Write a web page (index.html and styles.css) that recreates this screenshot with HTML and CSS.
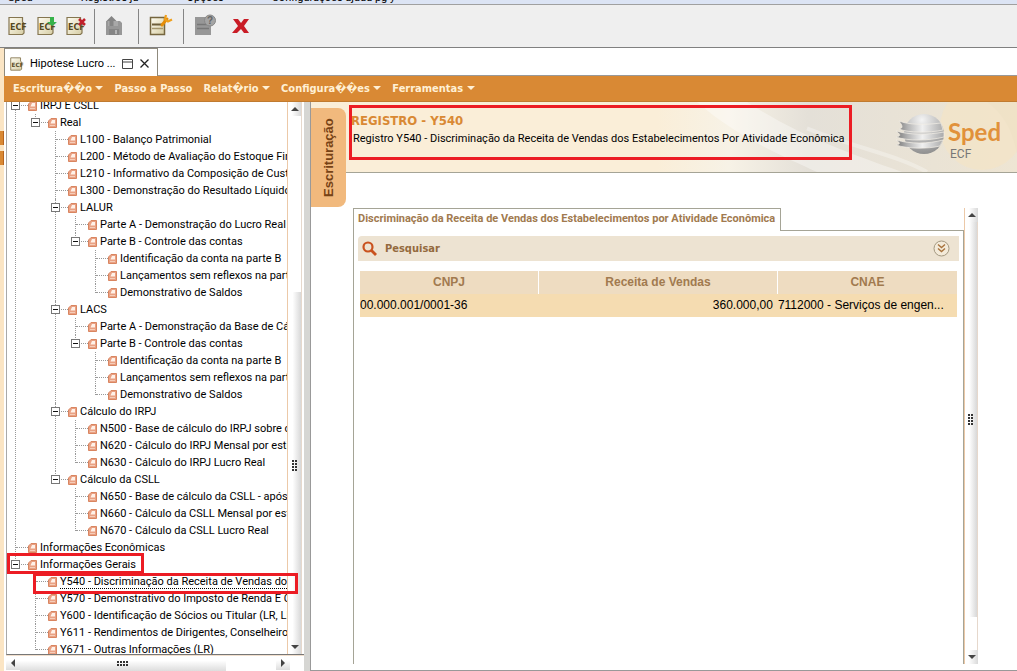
FILE: index.html
```html
<!DOCTYPE html>
<html lang="pt-BR">
<head>
<meta charset="utf-8">
<title>Sped ECF</title>
<link rel="stylesheet" href="styles.css">
</head>
<body>
<svg class="defs" aria-hidden="true">
  <defs>
    <linearGradient id="paper" x1="0" y1="0" x2="1" y2="1"><stop offset="0" stop-color="#fffdf2"/><stop offset="1" stop-color="#d6cda4"/></linearGradient>
    <radialGradient id="ball" cx=".45" cy=".15" r=".9"><stop offset="0" stop-color="#f4f4f4"/><stop offset=".5" stop-color="#bdbdbd"/><stop offset="1" stop-color="#8a8a8a"/></radialGradient>
    <linearGradient id="band"><stop offset="0" stop-color="#777"/><stop offset=".25" stop-color="#b5b5b5"/><stop offset=".55" stop-color="#f0f0f0"/><stop offset="1" stop-color="#a9a9a9"/></linearGradient>
    <symbol id="page" viewBox="0 0 9 10"><path d="M3 .5h5.500v9H.5V3z" fill="#e9a184"/><path d="M8.500.5v9H.5V3L3 .5z" fill="none" stroke="#d98560"/><path d="M4 2h3v3.500H2.500z" fill="#fff1e8"/><path d="M2 7.500h5" stroke="#f5cdb9"/></symbol>
    <symbol id="ecf" viewBox="0 0 22 22"><path d="M2 2.500h13.500v4.500l1.500 1.500v9.500l-1.500 1.500H2z" fill="url(#paper)" stroke="#857650" stroke-width="1.200"/><text x="3" y="15" class="ecf-word">ECF</text></symbol>
  </defs>
</svg>
<div class="app">
  <nav class="topstrip" aria-label="Principal"><span>Sped</span><span>Registros já</span><span>Opções</span><span>Configurações ajuda pg y</span></nav>
  <div class="toolbar" role="toolbar">
    <button aria-label="ECF"><svg width="22" height="22"><use href="#ecf"/></svg></button>
    <button aria-label="Importar ECF"><svg width="22" height="22"><use href="#ecf"/><path d="M14 2h4v5h3l-5 4-5-4h3z" fill="#36b24a"/></svg></button>
    <button aria-label="Excluir ECF"><svg width="22" height="22"><use href="#ecf"/><path d="M14 4l6 6M20 4l-6 6" stroke="#c1202b" stroke-width="2.500"/></svg></button>
    <i class="sep"></i>
    <button aria-label="Gravar cópia" disabled><svg width="22" height="22"><path d="M3 6h14l2 2v12H3z" fill="#979797"/><path d="M5 6h10v5H5z" fill="#a8a8a8"/><path d="M6 14h10v6H6z" fill="#858585"/><path d="M8.500 1l5 5h-3v5h-4V6h-3z" fill="#858585"/><path d="M12 15h2v4h-2z" fill="#b5b5b5"/></svg></button>
    <i class="sep"></i>
    <button aria-label="Configurar"><svg width="24" height="24"><path d="M1.500 3.500h14v17h-14z" fill="url(#paper)" stroke="#75663f" stroke-width="1.500"/><path d="M3 10.500h10" stroke="#6e5f3a" stroke-width="2"/><path d="M3 14.500h11" stroke="#a5976c" stroke-width="1.500"/><path d="M13 11l5-6" stroke="#e58e08" stroke-width="3" stroke-linecap="round"/><path d="M17 1l-1 4 3 2.500 4-2" fill="none" stroke="#f0a01c" stroke-width="2.200"/></svg></button>
    <i class="sep"></i>
    <button aria-label="Ajuda" disabled><svg width="24" height="24"><path d="M1 3h16v18H1z" fill="#979797"/><path d="M3 10.500h10M3 14.500h12" stroke="#777" stroke-width="1.500"/><circle cx="16" cy="6.500" r="5.500" fill="#a4a4a4" stroke="#888"/><text x="13" y="10" class="q">?</text></svg></button>
    <button aria-label="Sair" class="exit"><svg width="18" height="16"><path d="M1 1h5l3 4 3-4h5l-5 7 5 7h-5l-3-4-4 4H0l6-7z" fill="#c91c26"/></svg></button>
  </div>
  <div class="shell">
    <div class="edge"><b></b><b></b></div>
    <div class="window">
      <div class="tabs">
        <div class="tab"><svg width="18" height="16" viewBox="0 0 24 22"><use href="#ecf" width="22" height="22"/></svg><span>Hipotese Lucro ...</span>
          <button aria-label="Maximizar"><svg width="11" height="10"><path d="M.5.5h10v9H.5zM.5 3h10" fill="none" stroke="#444"/></svg></button>
          <button aria-label="Fechar"><svg width="9" height="9"><path d="M.5.5l8 8M8.500.5l-8 8" stroke="#222" stroke-width="1.300"/></svg></button>
        </div>
      </div>
      <nav class="menu">
        <button>Escritura&#xFFFD;&#xFFFD;o <i></i></button><button>Passo a Passo</button><button>Relat&#xFFFD;rio <i></i></button><button>Configura&#xFFFD;&#xFFFD;es <i></i></button><button>Ferramentas <i></i></button>
      </nav>
      <div class="work">
        <aside class="side">
          <div class="treebox">
            <div class="tree">
              <ul>
                <li><div class="row"><button aria-label="Recolher"></button><svg><use href="#page"/></svg>IRPJ E CSLL</div>
                  <ul>
                    <li><div class="row"><button aria-label="Recolher"></button><svg><use href="#page"/></svg>Real</div>
                      <ul>
                        <li><div class="row"><svg><use href="#page"/></svg>L100 - Balanço Patrimonial</div></li>
                        <li><div class="row"><svg><use href="#page"/></svg>L200 - Método de Avaliação do Estoque Final</div></li>
                        <li><div class="row"><svg><use href="#page"/></svg>L210 - Informativo da Composição de Custos</div></li>
                        <li><div class="row"><svg><use href="#page"/></svg>L300 - Demonstração do Resultado Líquido no Período</div></li>
                        <li><div class="row"><button aria-label="Recolher"></button><svg><use href="#page"/></svg>LALUR</div>
                          <ul>
                            <li><div class="row"><svg><use href="#page"/></svg>Parte A - Demonstração do Lucro Real</div></li>
                            <li><div class="row"><button aria-label="Recolher"></button><svg><use href="#page"/></svg>Parte B - Controle das contas</div>
                              <ul>
                                <li><div class="row"><svg><use href="#page"/></svg>Identificação da conta na parte B</div></li>
                                <li><div class="row"><svg><use href="#page"/></svg>Lançamentos sem reflexos na parte A</div></li>
                                <li><div class="row"><svg><use href="#page"/></svg>Demonstrativo de Saldos</div></li>
                              </ul></li>
                          </ul></li>
                        <li><div class="row"><button aria-label="Recolher"></button><svg><use href="#page"/></svg>LACS</div>
                          <ul>
                            <li><div class="row"><svg><use href="#page"/></svg>Parte A - Demonstração da Base de Cálculo</div></li>
                            <li><div class="row"><button aria-label="Recolher"></button><svg><use href="#page"/></svg>Parte B - Controle das contas</div>
                              <ul>
                                <li><div class="row"><svg><use href="#page"/></svg>Identificação da conta na parte B</div></li>
                                <li><div class="row"><svg><use href="#page"/></svg>Lançamentos sem reflexos na parte A</div></li>
                                <li><div class="row"><svg><use href="#page"/></svg>Demonstrativo de Saldos</div></li>
                              </ul></li>
                          </ul></li>
                        <li><div class="row"><button aria-label="Recolher"></button><svg><use href="#page"/></svg>Cálculo do IRPJ</div>
                          <ul>
                            <li><div class="row"><svg><use href="#page"/></svg>N500 - Base de cálculo do IRPJ sobre o Lucro</div></li>
                            <li><div class="row"><svg><use href="#page"/></svg>N620 - Cálculo do IRPJ Mensal por estimativa</div></li>
                            <li><div class="row"><svg><use href="#page"/></svg>N630 - Cálculo do IRPJ Lucro Real</div></li>
                          </ul></li>
                        <li><div class="row"><button aria-label="Recolher"></button><svg><use href="#page"/></svg>Cálculo da CSLL</div>
                          <ul>
                            <li><div class="row"><svg><use href="#page"/></svg>N650 - Base de cálculo da CSLL - após compensações</div></li>
                            <li><div class="row"><svg><use href="#page"/></svg>N660 - Cálculo da CSLL Mensal por estimativa</div></li>
                            <li><div class="row"><svg><use href="#page"/></svg>N670 - Cálculo da CSLL Lucro Real</div></li>
                          </ul></li>
                      </ul></li>
                  </ul></li>
                <li><div class="row"><svg><use href="#page"/></svg>Informações Econômicas</div></li>
                <li><div class="row"><button aria-label="Recolher"></button><svg><use href="#page"/></svg>Informações Gerais</div>
                  <ul>
                    <li><div class="row"><svg><use href="#page"/></svg><span class="current">Y540 - Discriminação da Receita de Vendas dos Estabelecimentos</span></div></li>
                    <li><div class="row"><svg><use href="#page"/></svg>Y570 - Demonstrativo do Imposto de Renda E CSLL</div></li>
                    <li><div class="row"><svg><use href="#page"/></svg>Y600 - Identificação de Sócios ou Titular (LR, LP)</div></li>
                    <li><div class="row"><svg><use href="#page"/></svg>Y611 - Rendimentos de Dirigentes, Conselheiros</div></li>
                    <li><div class="row"><svg><use href="#page"/></svg>Y671 - Outras Informações (LR)</div></li>
                  </ul></li>
              </ul>
            </div>
            <div class="vscroll side-scroll"><i class="cap up"></i><i class="thumb"><b class="grip"></b></i><i class="cap down"></i></div>
          </div>
          <div class="hscroll"><i class="cap left"></i><i class="thumb"><b class="grip flat"></b></i><i class="cap right"></i></div>
          <div class="mark mark-group"></div>
          <div class="mark mark-item"></div>
        </aside>
        <div class="divider"><i class="left"></i><i class="right"></i></div>
        <main>
          <header>
            <div class="headline"><h1>REGISTRO - Y540</h1><p>Registro Y540 - Discriminação da Receita de Vendas dos Estabelecimentos Por Atividade Econômica</p></div>
            <svg class="backdrop" width="360" height="70" viewBox="0 0 360 69" preserveAspectRatio="none" aria-hidden="true"><defs><linearGradient id="fade"><stop offset="0" stop-color="#faeed8"/><stop offset=".2" stop-color="#f7f2e6"/><stop offset=".42" stop-color="#e4e0d8"/><stop offset="1" stop-color="#eee5d3"/></linearGradient></defs><path d="M0 0h360v69H0z" fill="url(#fade)"/><path d="M90 0c50 32 95 48 155 69h-85C130 55 80 35 40 0z" fill="#fff" opacity=".35"/><path d="M150 26c50 20 90 26 120 43" stroke="#fff" stroke-width="4" fill="none" opacity=".3"/><path d="M270 0h60c20 15 25 30 30 50V0z" fill="#ded4c0" opacity=".5"/><circle cx="325" cy="25" r="42" fill="#f3e4c6" opacity=".7"/></svg>
            <svg class="brand" width="110" height="52" role="img" aria-label="Sped ECF"><circle cx="34" cy="23" r="20" fill="url(#ball)"/><path d="M9 10c10 4 26 4 42 2l2 7c-14 3-34 3-44-1 5-1 3-4 0-8zM6 20c13 4 32 4 48 1v5c-16 4-36 4-48 0 6-1 4-3 0-6zM6 29c14 4 32 4 47 0l-3 6c-12 3-32 3-44-1 6-1 3-3 0-5z" fill="url(#band)" stroke="#f3efe6" stroke-width=".7"/><text x="58" y="30" class="brand-name">Sped</text><text x="60" y="47" class="brand-sub">ECF</text></svg>
            <div class="mark mark-head"></div>
            <button class="sidetab">Escrituração</button>
          </header>
          <div class="content">
            <section class="panel">
              <div class="paneltabs"><h2>Discriminação da Receita de Vendas dos Estabelecimentos por Atividade Econômica</h2><span></span></div>
              <div class="panelbody">
                <div class="search"><svg width="16" height="16"><circle cx="6" cy="6" r="4.500" fill="none" stroke="#c9521e" stroke-width="2.200"/><path d="M9.500 9.500l4.500 4.500" stroke="#c9521e" stroke-width="2.800"/></svg><span>Pesquisar</span><button aria-label="Expandir"><svg width="17" height="17"><circle cx="8.500" cy="8.500" r="7.500" fill="#f3ead9" stroke="#a39880"/><path d="M5 4.500l3.500 3 3.500-3M5 8.500l3.500 3 3.500-3" fill="none" stroke="#a8733d" stroke-width="1.400"/></svg></button></div>
                <table>
                  <colgroup><col class="c1"><col class="c2"><col class="c3"></colgroup>
                  <thead><tr><th>CNPJ</th><th>Receita de Vendas</th><th>CNAE</th></tr></thead>
                  <tbody><tr><td>00.000.001/0001-36</td><td class="num">360.000,00</td><td>7112000 - Serviços de engen...</td></tr></tbody>
                </table>
              </div>
            </section>
            <div class="vscroll main-scroll"><i class="cap up"></i><i class="thumb"><b class="grip"></b></i><i class="cap down"></i></div>
          </div>
        </main>
      </div>
    </div>
  </div>
</div>
</body>
</html>
```
FILE: styles.css
```css
* { box-sizing: border-box; }
body { margin: 0; font: 11px/17px Roboto, sans-serif; color: #000; background: #fff; }
button { margin: 0; padding: 0; border: 0; background: none; font: inherit; color: inherit; }
svg { display: block; flex: none; }
ul { list-style: none; margin: 0; padding: 0; }
h1, h2, p { margin: 0; }
i { font-style: normal; }
.defs { position: absolute; width: 0; height: 0; }
.app { height: 100vh; display: flex; flex-direction: column; overflow: hidden; }

.topstrip { height: 5px; flex: none; display: flex; gap: 48px; align-items: flex-end; padding-left: 8px; overflow: hidden; background: #dce4f4; border-bottom: 1px solid #a0a0a0; line-height: 12px; }
.toolbar { height: 43px; flex: none; display: flex; align-items: center; gap: 7px; padding-left: 7px; background: #efefef; border-bottom: 1px solid #808080; }
.toolbar .sep { width: 1px; height: 35px; background: #858585; }
.toolbar .sep + button { margin: 0 6px 0 1px; }
.toolbar .sep:nth-of-type(n+2) + button { margin: 0 3px; }
.toolbar .exit { margin-left: 4px; }
.ecf-word { font: bold 8px "DejaVu Sans", sans-serif; fill: #57491f; }
.q { font: bold 10px "Liberation Sans", sans-serif; fill: #666; }

.shell { flex: 1; min-height: 0; display: flex; }
.edge { width: 4px; flex: none; background: #fbe5c4; padding-top: 83px; }
.edge b { display: block; height: 14px; margin-bottom: 6px; background: #d98934; border-right: 1px solid #b8651f; }
.window { flex: 1; min-width: 0; display: flex; flex-direction: column; }
.tabs { height: 28px; flex: none; display: flex; border-bottom: 1px solid #999; }
.tab { height: 28px; display: flex; align-items: center; gap: 3px; padding: 2px 8px 0 4px; border: 1px solid #8f8a7d; border-bottom: 0; background: #fff; }
.tab span { margin-right: 4px; }
.tab button + button { margin-left: 4px; }
.menu { height: 26px; flex: none; display: flex; align-items: center; gap: 11px; padding-left: 9px; background: #d98934; border-bottom: 1px solid #c07b30; color: #fff0d5; font-family: "DejaVu Sans Condensed", sans-serif; font-weight: bold; white-space: nowrap; }
.menu i { display: inline-block; border: 4px solid transparent; border-top-color: #fff0d5; border-bottom: 0; margin-bottom: 2px; }

.work { flex: 1; min-height: 0; display: flex; }
.side { position: relative; width: 300px; flex: none; display: flex; flex-direction: column; padding-left: 2px; }
.treebox { flex: 1; min-height: 0; display: flex; border-left: 1px solid #a9a9a9; border-bottom: 1px solid #777; }
.tree { flex: 1; min-width: 0; overflow: hidden; padding-left: 3px; border-right: 1px solid #ecc9a8; }
.tree > ul { margin-top: -5px; }
.tree li { position: relative; }
.tree ul ul { padding-left: 20px; }
.tree li::before { content: ""; position: absolute; left: 5px; top: 0; bottom: 0; border-left: 1px dotted #999; }
.tree li:last-child::before { bottom: auto; height: 9px; }
.row { position: relative; height: 17px; display: flex; align-items: center; gap: 3px; padding-left: 18px; white-space: nowrap; }
.row::before { content: ""; position: absolute; left: 6px; width: 12px; top: 8px; border-top: 1px dotted #999; }
.row svg { width: 9px; height: 10px; }
.row button { position: absolute; left: 1px; top: 4px; width: 9px; height: 9px; border: 1px solid #777; background: linear-gradient(#111, #111) center / 5px 1px no-repeat #fff; }
.current { border-bottom: 1px dotted #000; line-height: 13px; }

.vscroll { width: 14px; flex: none; display: flex; flex-direction: column; border-right: 1px solid #e6d8cc; }
.cap { width: 14px; height: 14px; flex: none; display: grid; place-items: center; background: linear-gradient(90deg, #fff 30%, #d9d9d9); }
.cap::before, .divider i::before { content: ""; border: 4px solid transparent; }
.up::before { border-bottom-color: #444; border-top: 0; }
.down::before { border-top-color: #444; border-bottom: 0; }
.vscroll .cap { width: 13px; }
.left::before { border-right-color: #444; border-left: 0; }
.right::before { border-left-color: #444; border-right: 0; }
.thumb { display: grid; place-items: center; background: linear-gradient(90deg, #fff 35%, #d8d8d8); }
.grip { width: 6px; height: 12px; background: radial-gradient(circle at 1px 1px, #333 1px, transparent 1px) 0 0 / 3px 3px; }
.side-scroll { margin-right: 2px; }
.side-scroll .thumb { flex: 1; margin-top: 176px; }
.hscroll { height: 16px; flex: none; display: flex; padding-right: 14px; border-top: 1px solid #f1dfcd; }
.hscroll .cap { height: 14px; background: linear-gradient(#fff 30%, #ddd); }
.hscroll .thumb { width: 206px; margin-right: auto; background: linear-gradient(#fff 30%, #ddd); }
.flat { width: 12px; height: 6px; }
.divider { width: 7px; flex: none; background: #d6d6d3; border-right: 1px solid #999; padding-top: 2px; }
.divider i { height: 11px; display: grid; place-items: center; }
.mark { position: absolute; border: 3px solid #ec1c24; }
.mark-group { left: 3px; top: 451px; width: 137px; height: 21px; }
.mark-item { left: 29px; top: 471px; width: 265px; height: 21px; }

main { flex: 1; min-width: 0; display: flex; flex-direction: column; border-bottom: 1px solid #999; }
header { position: relative; height: 71px; flex: none; display: flex; justify-content: space-between; padding: 0 17px 0 40px; background: #faeed8; border-bottom: 1px solid #a5a496; }
.headline { position: relative; z-index: 1; padding-top: 10px; white-space: nowrap; }
h1 { font: bold 13px/18px "DejaVu Sans Condensed", sans-serif; color: #d98934; }
.headline p { padding-left: 2px; }
.backdrop { position: absolute; right: 0; top: 0; }
.brand { position: relative; align-self: center; }
.brand-name { font: bold 24px Lato, sans-serif; fill: #e1913b; }
.brand-sub { font: 12px Roboto, sans-serif; fill: #777; }
.mark-head { left: 38px; top: 3px; width: 503px; height: 55px; z-index: 1; }
.sidetab { position: absolute; left: 0; top: 6px; width: 35px; height: 99px; writing-mode: vertical-rl; transform: rotate(180deg); text-align: center; border-radius: 8px 0 0 8px; background: #f1b97d; color: #774215; font: bold 13px/35px "Liberation Sans", sans-serif; }
.content { flex: 1; min-height: 0; display: flex; padding: 35px 39px 6px 42px; }
.panel { flex: 1; min-width: 0; display: flex; flex-direction: column; }
.paneltabs { display: flex; height: 23px; }
h2 { height: 23px; padding: 0 5px 0 4px; border: 1px solid #a5a496; border-bottom: 0; font: bold 11px/20px Roboto, sans-serif; color: #a17a4f; white-space: nowrap; }
.paneltabs span { flex: 1; border-bottom: 1px solid #a5a496; }
.panelbody { flex: 1; padding: 5px 4px; border: 1px solid #a5a496; border-width: 0 1px; }
.search { height: 25px; display: flex; align-items: center; gap: 7px; padding: 0 9px 0 4px; border-radius: 4px 0 0 0; background: #ede3d2; color: #946a3e; font-family: "DejaVu Sans Condensed", sans-serif; font-weight: bold; }
.search button { margin-left: auto; }
table { width: calc(100% - 4px); margin: 10px 2px; border-spacing: 0; table-layout: fixed; font: 12px/23px "Liberation Sans", sans-serif; }
.c1 { width: 30%; }
.c2 { width: 40%; }
th { padding: 0; background: #eedcc1; color: #a17a4f; border-right: 1px solid #fff; }
th:last-child { border-right: 0; }
td { padding: 0; background: #f5dcb1; white-space: nowrap; overflow: hidden; }
td.num { text-align: right; padding-right: 5px; }
.main-scroll { border-left: 1px solid #ecc9a8; }
.main-scroll .thumb { flex: 1; margin-bottom: 33px; }
```
